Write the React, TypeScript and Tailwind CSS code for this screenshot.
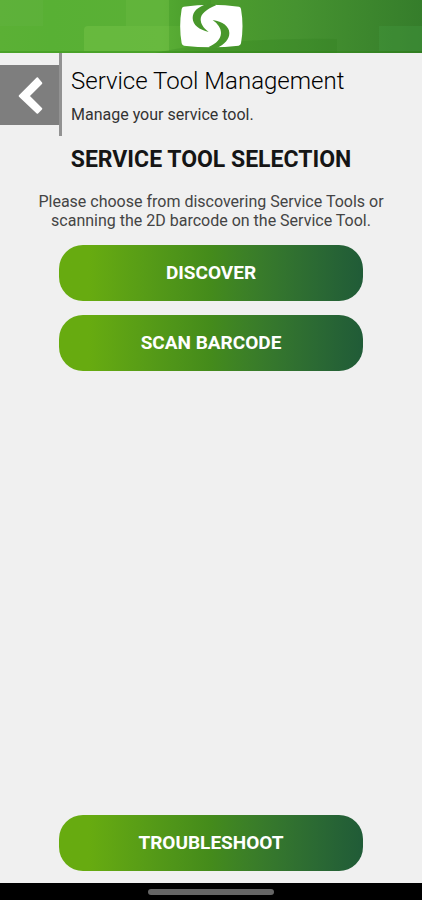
import React from 'react';

const screen = {
  title: "Service Tool Management",
  subtitle: "Manage your service tool.",
  heading: "SERVICE TOOL SELECTION",
  description: "Please choose from discovering Service Tools or scanning the 2D barcode on the Service Tool.",
  actions: ["DISCOVER", "SCAN BARCODE"],
};

const Logo = () => (
  <svg viewBox="44 12 189 135" className="relative h-[45px] w-[63px]" role="img" aria-label="Logo">
    <path fill="#fff" d="M55 20 Q138 8 221 20 Q226 21 227 27 Q236 79 227 130 Q226 136 220 137 Q138 147 56 137 Q50 136 49 130 Q40 79 49 27 Q50 21 55 20Z" />
    <path fill="#48972b" d="M126 12 C97 20 82 35 82 54 C82 75 102 89 130 96 C113 83 106 71 106 58 C106 42 124 27 152 16 L148 12Z" />
    <path fill="#48972b" d="M142 60 C172 65 192 79 192 99 C192 119 178 132 155 144 L134 144 L130 141 C155 130 166 117 167 99 C167 84 157 71 142 60Z" />
  </svg>
);

const Header = () => (
  <header className="relative flex h-[53px] justify-center overflow-hidden pt-[4px]">
    <svg viewBox="0 0 422 53" preserveAspectRatio="none" className="absolute inset-0 h-full w-full" aria-hidden="true">
      <defs>
        <linearGradient id="header-base">
          <stop offset="0" stopColor="#5bb035" />
          <stop offset=".12" stopColor="#58b034" />
          <stop offset=".38" stopColor="#5bb036" />
          <stop offset=".5" stopColor="#4d9e2d" />
          <stop offset=".7" stopColor="#469330" />
          <stop offset="1" stopColor="#357d2b" />
        </linearGradient>
      </defs>
      <path fill="url(#header-base)" d="M0 0h422v53H0z" />
      <path fill="#66b244" opacity=".3" d="M0 0h43v26H0z" />
      <path fill="#7cc750" opacity=".2" d="M126 0h43v26h-43z" />
      <path fill="#80cc50" opacity=".35" d="M84 30q0-4 4-4h81v25H84z" />
      <path fill="#257c1c" opacity=".12" d="M169 0h42v26h-42z" />
      <path fill="#46a044" opacity=".3" d="M379 26h43v25h-43z" />
      <path fill="#267618" opacity=".2" d="M155 53Q230 37 337 39v14z" />
      <path fill="#27820d" opacity=".3" d="M0 51h422v2H0z" />
    </svg>
    <Logo />
  </header>
);

const GradientButton = ({ label }: { label: string }) => (
  <button
    type="button"
    className="h-14 w-full rounded-3xl bg-linear-to-r from-[#67ab10] from-10% via-[#448b1b] via-50% to-[#205b37] text-[19px] font-bold text-white"
  >
    {label}
  </button>
);

export default function App() {
  return (
    <div className="flex min-h-screen flex-col bg-[#f0f0f0] font-['Roboto',sans-serif] text-[#151515]">
      <Header />
      <main className="flex flex-1 flex-col">
        <div className="flex">
          <div className="flex w-[62px] border-r-3 border-[#929292] pt-3 pb-[11px]">
            <button type="button" aria-label="Back" className="flex h-[60px] w-full items-center justify-center bg-[#7e7e7e]">
              <svg viewBox="0 0 60 60" className="h-[60px] w-[60px]" fill="#fff" stroke="#fff" strokeWidth="2" strokeLinejoin="round" aria-hidden="true">
                <path d="M38 13 42 18 29 31 42 44 38 48 20 31Z" />
              </svg>
            </button>
          </div>
          <div className="pt-[13px] pl-[9px]">
            <h1 className="text-2xl leading-[30px] font-light text-black">{screen.title}</h1>
            <p className="mt-2 text-base leading-[22px] text-[#333]">{screen.subtitle}</p>
          </div>
        </div>

        <section className="mt-2 px-5 text-center">
          <h2 className="text-[23px] leading-8 font-bold">{screen.heading}</h2>
          <p className="mt-4 text-base leading-[19px] text-[#444]">{screen.description}</p>
        </section>
        <div className="mt-[15px] flex flex-1 flex-col gap-[14px] px-[59px] pb-3">
          {screen.actions.map((label) => (
            <GradientButton key={label} label={label} />
          ))}
          <div className="mt-auto">
            <GradientButton label="TROUBLESHOOT" />
          </div>
        </div>
      </main>
      <footer className="flex h-[17px] items-center justify-center bg-black">
        <div className="h-[6px] w-[126px] rounded-full bg-[#656565]"></div>
      </footer>
    </div>
  );
}
